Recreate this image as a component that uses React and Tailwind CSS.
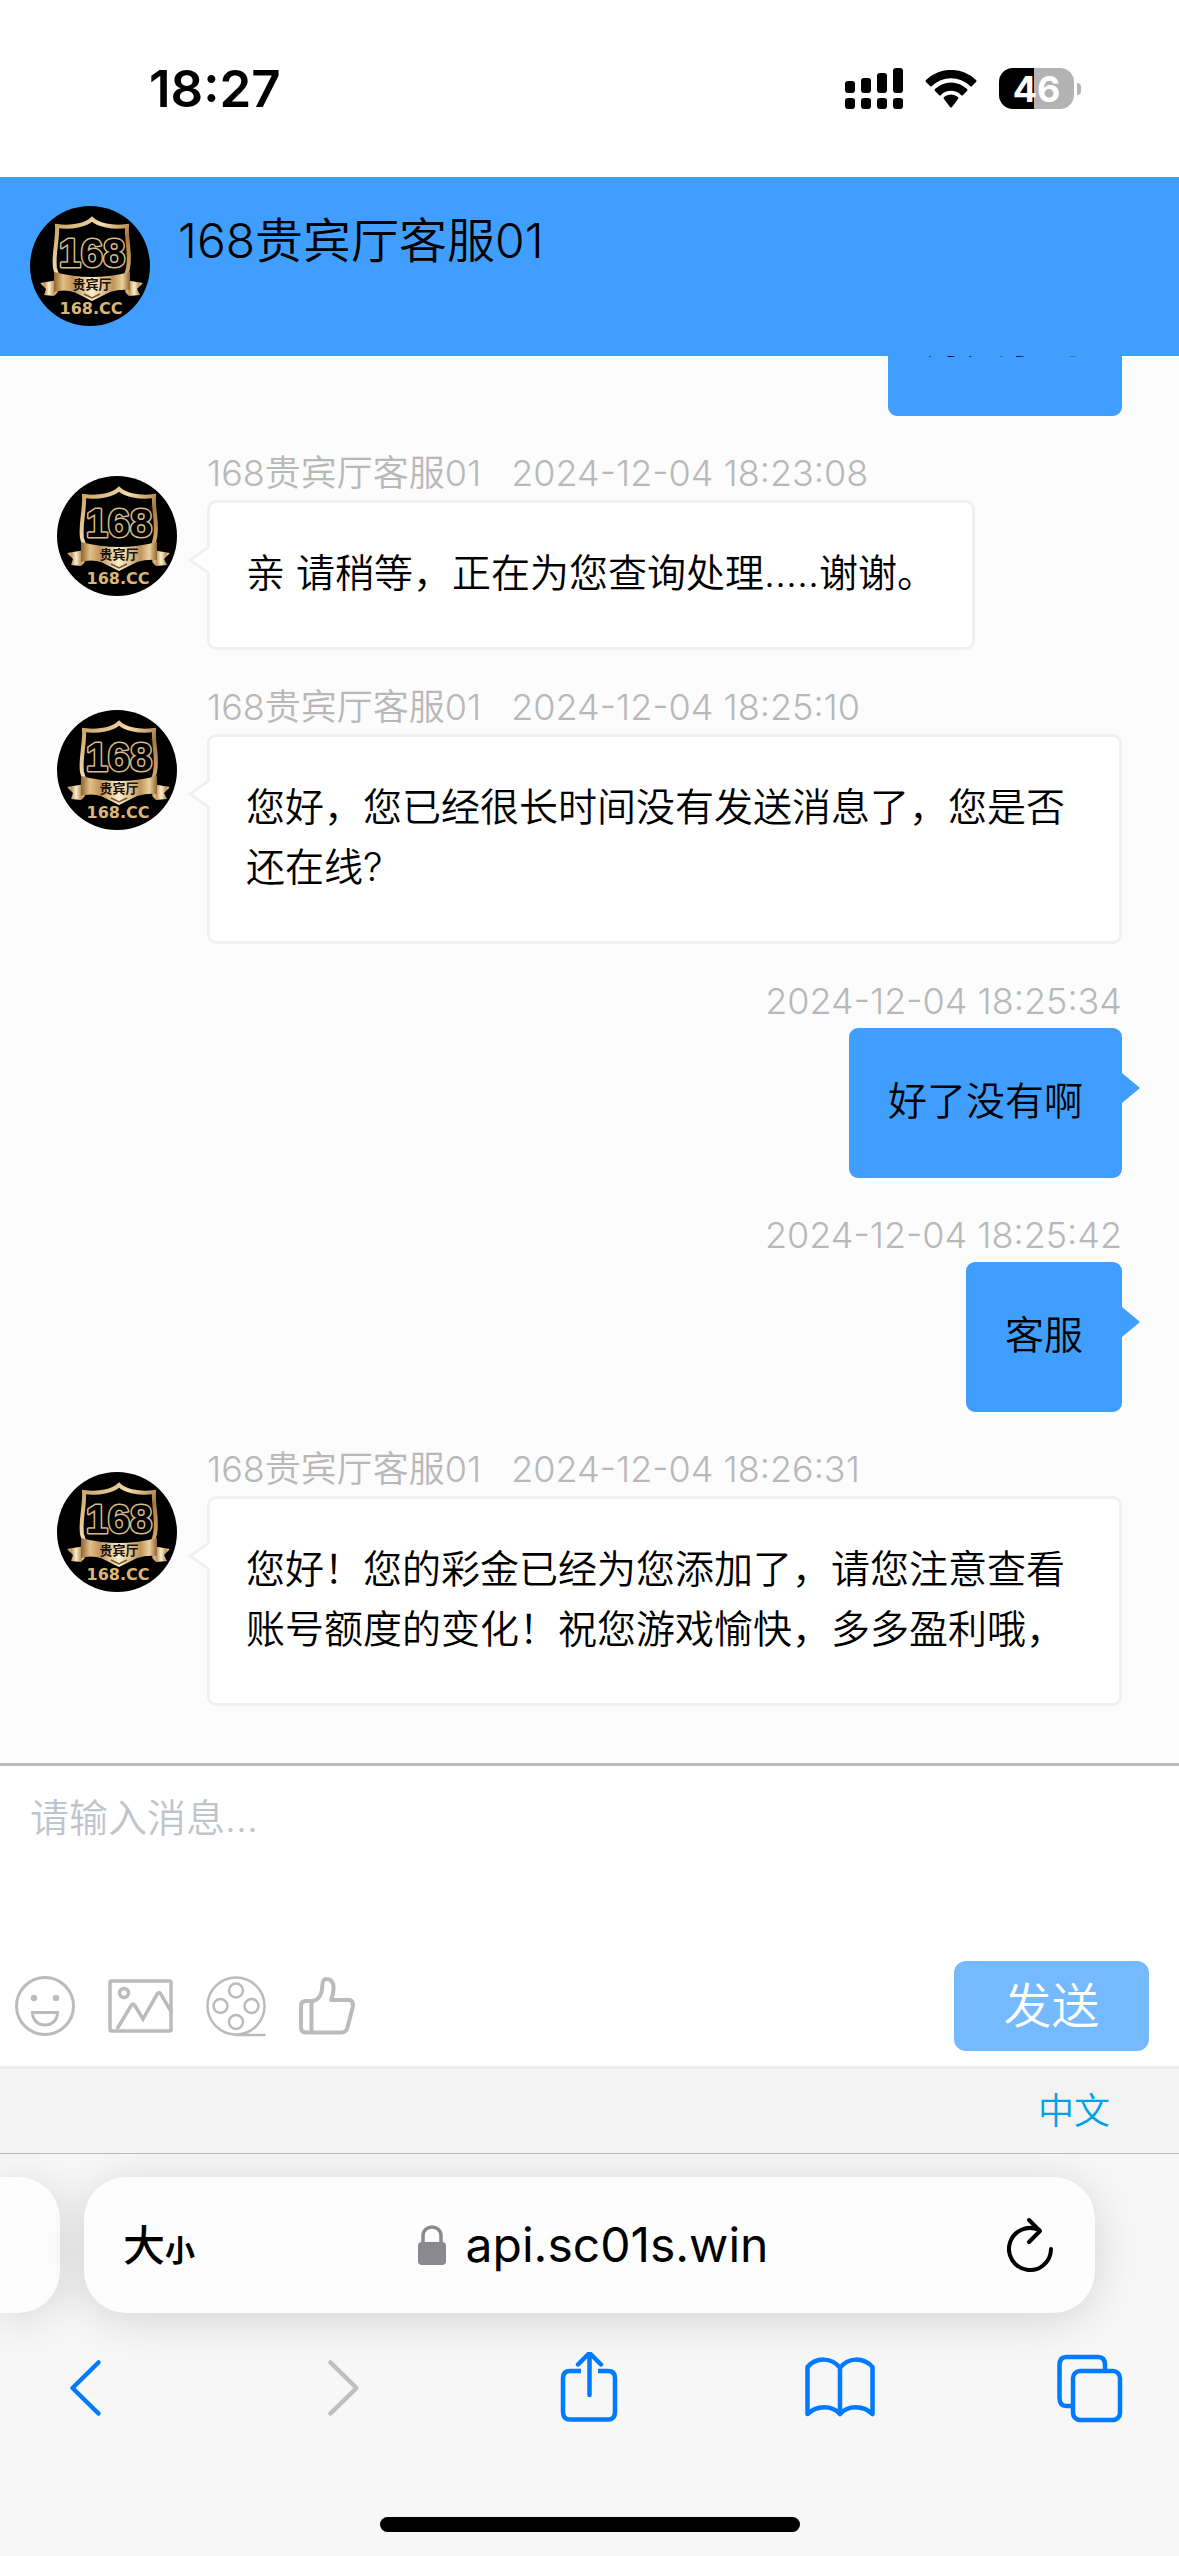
import React, { useId, useState } from "react";

const AGENT = "168贵宾厅客服01";

const messages = [
  { id: 1, mine: true, time: "2024-12-04 18:22:51", text: "好久了吗" },
  { id: 2, mine: false, time: "2024-12-04 18:23:08", text: "亲 请稍等，正在为您查询处理.....谢谢。" },
  { id: 3, mine: false, time: "2024-12-04 18:25:10", text: "您好，您已经很长时间没有发送消息了，您是否还在线?" },
  { id: 4, mine: true, time: "2024-12-04 18:25:34", text: "好了没有啊" },
  { id: 5, mine: true, time: "2024-12-04 18:25:42", text: "客服" },
  { id: 6, mine: false, time: "2024-12-04 18:26:31", text: "您好！您的彩金已经为您添加了，请您注意查看账号额度的变化！祝您游戏愉快，多多盈利哦，" },
];

/* -------- Avatar badge -------- */
function Avatar() {
  const gold = useId();
  const band = useId();

  return (
    <svg viewBox="0 0 120 120" className="size-[120px] shrink-0" role="img" aria-label={AGENT}>
      <defs>
        <linearGradient id={gold} x1="0" y1="0" x2="1" y2="1">
          <stop offset="0" stopColor="#c89a5a" />
          <stop offset="0.35" stopColor="#f3dcae" />
          <stop offset="0.6" stopColor="#a8773c" />
          <stop offset="1" stopColor="#e8c88d" />
        </linearGradient>
        <linearGradient id={band} x1="0" y1="0" x2="1" y2="0">
          <stop offset="0" stopColor="#8f6432" />
          <stop offset="0.12" stopColor="#e2c088" />
          <stop offset="0.25" stopColor="#c1935a" />
          <stop offset="0.5" stopColor="#fbf0cf" />
          <stop offset="0.78" stopColor="#c1935a" />
          <stop offset="0.9" stopColor="#ecd09c" />
          <stop offset="1" stopColor="#8f6432" />
        </linearGradient>
      </defs>
      <circle cx="60" cy="60" r="60" fill="#000" />
      <path
        d="M62 13C56 19 42 22 27 20C28 34 23 48 25 62C28 78 46 84 62 92C78 84 96 78 98 62C101 48 96 34 97 20C82 22 68 19 62 13Z"
        fill="#000"
        stroke={`url(#${gold})`}
        strokeWidth="4"
      />
      <text
        x="62"
        y="61"
        textAnchor="middle"
        fontSize="40"
        fontWeight="700"
        fill="#000"
        stroke="#d9bb8a"
        strokeWidth="3"
        strokeLinejoin="round"
        paintOrder="stroke"
        style={{ fontFamily: '"Liberation Sans", sans-serif' }}
      >
        168
      </text>
      <path d="M10 77L28 74V86L24 90L14 89L16 83Z" fill={`url(#${band})`} />
      <path d="M113 77L95 74V86L99 90L110 89L107 83Z" fill={`url(#${band})`} />
      <path d="M24 66Q62 76 100 66V84Q90 83 80 86L62 95L44 86Q34 83 24 86Z" fill={`url(#${band})`} />
      <path d="M54 88L62 92L70 88" fill="none" stroke="#7a5528" strokeWidth="1.5" />
      <text
        x="62"
        y="83"
        textAnchor="middle"
        fontSize="13"
        fontWeight="700"
        fill="#1d1206"
        style={{ fontFamily: '"Noto Sans CJK SC", sans-serif' }}
      >
        贵宾厅
      </text>
      <text
        x="61"
        y="108"
        textAnchor="middle"
        fontSize="16"
        fontWeight="700"
        fill="#dcb678"
        style={{ fontFamily: '"DejaVu Sans", sans-serif' }}
      >
        168.CC
      </text>
    </svg>
  );
}

/* -------- Phone status bar -------- */
function StatusBar() {
  return (
    <div className="flex h-[177px] shrink-0 items-center justify-between bg-white pr-[98px] pl-[149px]">
      <span className="text-[51px] leading-none font-semibold">18:27</span>
      <div className="flex items-center gap-[22px]">
        <svg viewBox="0 0 58 41" className="h-[41px] w-[58px]" fill="#000">
          <rect x="0" y="13" width="10" height="12" rx="3" />
          <rect x="16" y="10" width="10" height="15" rx="3" />
          <rect x="32" y="5" width="10" height="20" rx="3" />
          <rect x="48" y="0" width="10" height="25" rx="3" />
          <rect x="0" y="30" width="10" height="11" rx="3" />
          <rect x="16" y="30" width="10" height="11" rx="3" />
          <rect x="32" y="30" width="10" height="11" rx="3" />
          <rect x="48" y="30" width="10" height="11" rx="3" />
        </svg>
        <svg viewBox="0 0 52 38" className="h-[38px] w-[52px]" fill="#000">
          <path d="M1 12Q0 11 1 10A36 36 0 0 1 51 10Q52 11 51 12L47 16Q46 17 45 16A27 27 0 0 0 7 16Q6 17 5 16Z" />
          <path d="M10 21Q9 20 10 19A23 23 0 0 1 42 19Q43 20 42 21L38 25Q37 26 36 25A14 14 0 0 0 16 25Q15 26 14 25Z" />
          <path d="M19 29Q18 28 19 27A11 11 0 0 1 33 27Q34 28 33 29L27 37Q26 38 25 37Z" />
        </svg>
        <div className="flex items-center gap-[3px]">
          <span className="flex h-[41px] w-[75px] items-center justify-center rounded-[14px] bg-[linear-gradient(90deg,#000_47%,#b3b3b3_47%)] text-4xl leading-none font-bold text-white">
            46
          </span>
          <span className="h-3 w-1 rounded-r-full bg-[#b3b3b3]" />
        </div>
      </div>
    </div>
  );
}

/* -------- One chat message -------- */
function Message({ mine, time, text }) {
  if (mine) {
    return (
      <li className="flex flex-col items-end">
        <p className="text-4xl leading-[54px] font-[350] text-[#b8b8b8]">{time}</p>
        <div className="relative rounded-[9px] border-3 border-[#409eff] bg-[#409eff] px-9 pt-10 pb-11 text-[39px] leading-[60px] font-[350]">
          {text}
          <svg viewBox="0 0 18 30" className="absolute top-[42px] -right-[21px] h-[30px] w-[18px]">
            <path d="M0 0L18 15L0 30Z" fill="#409eff" />
          </svg>
        </div>
      </li>
    );
  }

  return (
    <li className="flex items-start gap-[30px]">
      <div className="pt-[30px]">
        <Avatar />
      </div>
      <div className="flex min-w-0 flex-1 flex-col items-start">
        <p className="flex gap-[30px] text-4xl leading-[54px] font-[350] text-[#b8b8b8]">
          <span>{AGENT}</span>
          <span>{time}</span>
        </p>
        <div className="relative rounded-[9px] border-3 border-[#f0f0f0] bg-white px-9 pt-10 pb-11 text-[39px] leading-[60px] font-[350]">
          {text}
          <svg viewBox="0 0 24 32" className="absolute top-[41px] -left-6 h-8 w-6">
            <path d="M24 2L4 16L24 30" fill="#fff" stroke="#f0f0f0" strokeWidth="3" />
          </svg>
        </div>
      </div>
    </li>
  );
}

/* -------- Composer -------- */
function Composer() {
  const [draft, setDraft] = useState("");

  return (
    <form className="shrink-0 border-t-3 border-[#bbb] bg-white" onSubmit={(e) => e.preventDefault()}>
      <textarea
        aria-label="消息"
        value={draft}
        onChange={(e) => setDraft(e.target.value)}
        placeholder="请输入消息..."
        className="block h-[195px] w-full resize-none px-[30px] pt-[22px] text-[39px] leading-[60px] font-[350] outline-none placeholder:text-[#c0c4cc]"
      />
      <div className="flex items-center justify-between pr-[30px] pb-[15px] pl-[15px]">
        <div className="flex items-center gap-[33px] text-[#bbb]">
          <button type="button" aria-label="表情">
            <svg viewBox="0 0 60 60" className="size-[60px]" fill="none" stroke="currentColor" strokeWidth="3">
              <circle cx="30" cy="30" r="28.5" />
              <circle cx="19" cy="22" r="3.2" fill="currentColor" stroke="none" />
              <circle cx="41" cy="22" r="3.2" fill="currentColor" stroke="none" />
              <path d="M17.5 36.5H42.5C42.5 44 37 49 30 49S17.5 44 17.5 36.5Z" />
            </svg>
          </button>
          <button type="button" aria-label="图片">
            <svg viewBox="0 0 65 54" className="h-[54px] w-[65px]" fill="none" stroke="currentColor" strokeWidth="3.5">
              <rect x="2" y="2" width="61" height="50" rx="1.5" />
              <circle cx="16" cy="14" r="4.5" />
              <path d="M9 50L23.5 26Q25 24 26.5 26L35 40L49.5 14.5Q51 12.5 52.5 14.5L64 34" />
            </svg>
          </button>
          <button type="button" aria-label="视频">
            <svg viewBox="0 0 60 61" className="h-[61px] w-[60px]" fill="none" stroke="currentColor" strokeWidth="2.5">
              <circle cx="30" cy="30" r="28.5" />
              <circle cx="30" cy="14.5" r="7" />
              <circle cx="14.5" cy="30" r="7" />
              <circle cx="45.5" cy="30" r="7" />
              <circle cx="30" cy="46" r="7" />
              <path d="M30 59H58.5" strokeLinecap="round" />
            </svg>
          </button>
          <button type="button" aria-label="评价">
            <svg viewBox="0 0 56 58" className="h-[58px] w-14" fill="none" stroke="currentColor" strokeWidth="4" strokeLinejoin="round">
              <path d="M12.5 24H7Q2 24 2 29V50Q2 55.5 7 55.5H42Q47 55.5 48.3 51L54 29Q54.5 23.5 50 23H32Q35 16 34.5 9Q33.5 2 27.5 2Q23.5 2 23.3 9C23 18 19 24 12.5 24Z" />
              <path d="M12.5 24V55.5" />
            </svg>
          </button>
        </div>
        <button type="submit" className="h-[90px] w-[195px] rounded-xl bg-[#75baff] text-5xl font-[350] text-white">
          发送
        </button>
      </div>
    </form>
  );
}

/* -------- Browser chrome -------- */
function BrowserBar() {
  return (
    <div className="shrink-0 overflow-hidden border-t border-[#bcbcbc] bg-[#f7f7f7] pt-[23px] pb-6">
      <div className="flex h-[136px] gap-6 pr-[84px]">
        <div className="w-[60px] rounded-r-[42px] bg-[#fdfdfd] shadow-[0_6px_48px_rgba(0,0,0,0.14)]" />
        <div className="flex flex-1 items-center justify-between rounded-[42px] bg-[#fdfdfd] pr-[42px] pl-[39px] shadow-[0_6px_48px_rgba(0,0,0,0.14)]">
          <button type="button" aria-label="页面设置" className="flex w-20 items-baseline">
            <span className="text-[42px] font-medium">大</span>
            <span className="text-3xl font-bold">小</span>
          </button>
          <div className="flex items-center gap-5">
            <svg viewBox="0 0 28 40" className="h-10 w-7">
              <path d="M5 18V11C5 -1 23 -1 23 11V18" fill="none" stroke="#8a8a8e" strokeWidth="3.5" />
              <rect x="0" y="17" width="28" height="23" rx="4" fill="#8a8a8e" />
            </svg>
            <span className="text-5xl">api.sc01s.win</span>
          </div>
          <button type="button" aria-label="刷新" className="flex w-[70px] justify-end">
            <svg viewBox="0 0 46 56" className="h-14 w-[46px]" fill="none" stroke="#000" strokeWidth="4" strokeLinecap="round" strokeLinejoin="round">
              <path d="M44 32A21 21 0 1 1 32 13" />
              <path d="M22 3L33 14L22 25" />
            </svg>
          </button>
        </div>
      </div>

      <nav className="mt-[39px] flex items-center justify-between px-[50px] text-[#007aff]">
        <button type="button" aria-label="后退">
          <svg viewBox="0 0 72 72" className="size-[72px]" fill="none" stroke="currentColor" strokeWidth="4.5" strokeLinecap="round" strokeLinejoin="round">
            <path d="M48.5 10.5L22.5 36L48.5 61.5" />
          </svg>
        </button>
        <button type="button" aria-label="前进" className="text-[#bfbfbf]">
          <svg viewBox="0 0 72 72" className="size-[72px]" fill="none" stroke="currentColor" strokeWidth="4.5" strokeLinecap="round" strokeLinejoin="round">
            <path d="M28.5 10.5L54.5 36L28.5 61.5" />
          </svg>
        </button>
        <button type="button" aria-label="分享">
          <svg viewBox="0 0 72 72" className="size-[72px]" fill="none" stroke="currentColor" strokeWidth="4.5" strokeLinecap="round" strokeLinejoin="round">
            <path d="M35.5 43V1M24 12.5L35.5 1L47 12.5" />
            <path d="M27 19H16Q9 19 9 26V60Q9 67.5 16 67.5H54Q61 67.5 61 60V26Q61 19 54 19H44" strokeLinecap="butt" />
          </svg>
        </button>
        <button type="button" aria-label="书签">
          <svg viewBox="0 0 72 72" className="size-[72px]" fill="none" stroke="currentColor" strokeWidth="4.5" strokeLinejoin="round">
            <path d="M35 16C27 5 11 5 2.5 15V62C12 53 27 53 35 62C43 53 58 53 67.5 62V15C58 5 43 5 35 16ZM35 16V62" />
          </svg>
        </button>
        <button type="button" aria-label="标签页">
          <svg viewBox="0 0 72 72" className="size-[72px]" fill="none" stroke="currentColor" strokeWidth="4.5">
            <path d="M15 54H9.5Q2.5 54 2.5 46V13Q2.5 5 9.5 5H41Q48 5 48 13V19" />
            <rect x="16" y="19" width="47" height="49" rx="7" />
          </svg>
        </button>
      </nav>

      <div className="mx-auto mt-[93px] h-[15px] w-[420px] rounded-full bg-black" />
    </div>
  );
}

export default function App() {
  return (
    <div className="flex h-screen flex-col font-['Inter','Noto_Sans_CJK_SC',sans-serif] text-black">
      <StatusBar />

      {/* HEADER */}
      <header className="flex shrink-0 items-start gap-7 bg-[#409eff] px-[30px] pt-[29px] pb-[30px]">
        <Avatar />
        <h1 className="text-5xl leading-[70px] font-[350]">{AGENT}</h1>
      </header>

      {/* MESSAGES */}
      <main className="flex min-h-0 flex-1 flex-col justify-end overflow-hidden bg-[#fcfcfc] px-[57px] pb-[57px]">
        <ul className="flex flex-col gap-[30px]">
          {messages.map((m) => (
            <Message key={m.id} {...m} />
          ))}
        </ul>
      </main>

      <Composer />

      {/* LANGUAGE */}
      <div className="flex h-[87px] shrink-0 items-center justify-end border-t-3 border-[#ebebeb] bg-[#f3f3f3] pr-[69px]">
        <a href="#lang" className="text-4xl font-[350] text-[#00a0e9]">
          中文
        </a>
      </div>

      <BrowserBar />
    </div>
  );
}
